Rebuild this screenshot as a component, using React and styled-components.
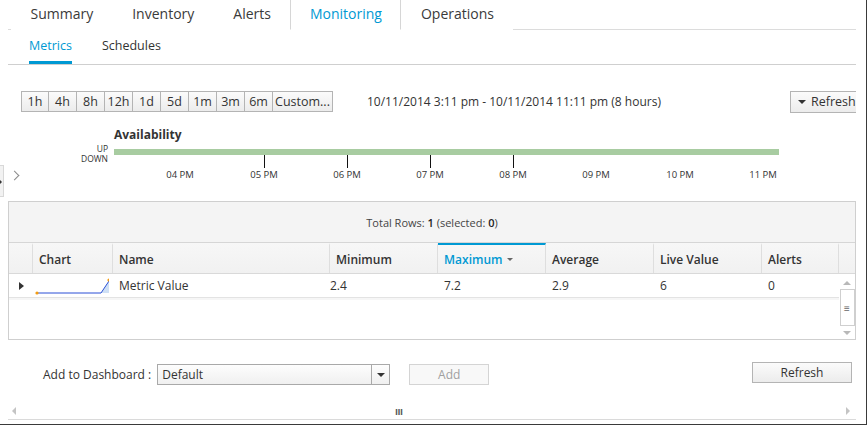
import React from 'react'
import styled, { createGlobalStyle } from 'styled-components'

const GlobalStyle = createGlobalStyle`
  html, body { margin: 0; padding: 0; background: #fff; }
  body { font-family: "Open Sans", "Liberation Sans", sans-serif; color: #333; }
  * { box-sizing: border-box; }
`

const BLUE = '#0099d3'

const Frame = styled.div`
  position: relative;
  width: 867px;
  height: 425px;
  padding-left: 8px;
  border-right: 1px solid #3a3a3a;
  border-bottom: 1px solid #3a3a3a;
  background: #fff;
  overflow: hidden;
`

const Content = styled.div`
  width: 848px;
  height: 100%;
  overflow: hidden;
  display: flex;
  flex-direction: column;
`

const TabBar = styled.div`
  display: flex;
  height: 30px;
  padding-left: 3px;
  border-bottom: 1px solid #dcdcdc;
  flex-shrink: 0;
`

const Tab = styled.div`
  padding: 0 18.5px;
  height: 30px;
  line-height: 28px;
  font-size: 14px;
  color: ${p => (p.$active ? BLUE : '#3a3a3a')};
  background: #fff;
  border: 1px solid ${p => (p.$active ? '#d6d6d6' : 'transparent')};
  border-top: none;
  border-bottom: 1px solid ${p => (p.$active ? '#fff' : 'transparent')};
`

const SubTabBar = styled.div`
  display: flex;
  gap: 30px;
  height: 35px;
  padding-left: 21px;
  border-bottom: 1px solid #cfcfcf;
  flex-shrink: 0;
`

const SubTab = styled.div`
  height: 34px;
  line-height: 31px;
  font-size: 12.5px;
  color: ${p => (p.$active ? BLUE : '#333')};
  border-bottom: 3px solid ${p => (p.$active ? BLUE : 'transparent')};
`

const Toolbar = styled.div`
  display: flex;
  align-items: center;
  margin-top: 26px;
  height: 21px;
  padding-left: 13px;
  flex-shrink: 0;
`

const RangeButton = styled.div`
  width: ${p => p.$w || 28}px;
  height: 21px;
  line-height: 19px;
  text-align: center;
  font-size: 12.5px;
  color: #333;
  white-space: nowrap;
  overflow: visible;
  background: linear-gradient(#fbfbfb, #ececec);
  border: 1px solid #b4b4b4;
  border-left: ${p => (p.$first ? '1px solid #b4b4b4' : 'none')};
`

const DateRange = styled.div`
  margin-left: 34px;
  font-size: 12px;
  color: #333;
  white-space: nowrap;
`

const MenuButton = styled.div`
  margin-left: auto;
  margin-right: -16px;
  flex-shrink: 0;
  width: 82px;
  height: 22px;
  display: flex;
  align-items: center;
  gap: 5px;
  padding-left: 7px;
  font-size: 12.5px;
  color: #333;
  background: linear-gradient(#fbfbfb, #ececec);
  border: 1px solid #b4b4b4;
  &::before {
    content: '';
    border-left: 4px solid transparent;
    border-right: 4px solid transparent;
    border-top: 4px solid #333;
    margin-top: 1px;
  }
`

const AvailTitle = styled.div`
  margin-top: 15px;
  padding-left: 106px;
  font-size: 12px;
  font-weight: 700;
  line-height: 16px;
  color: #333;
  flex-shrink: 0;
`

const ChartSvg = styled.svg`
  display: block;
  flex-shrink: 0;
  text {
    font-family: "Open Sans", "Liberation Sans", sans-serif;
    fill: #333;
  }
`

const Handle = styled.div`
  position: absolute;
  left: 0;
  top: 165px;
  width: 4px;
  height: 32px;
  background: #f2f2f2;
  border: 1px solid #d8d8d8;
  border-left: none;
  &::after {
    content: '';
    position: absolute;
    left: -1px;
    top: 13px;
    border-top: 3px solid transparent;
    border-bottom: 3px solid transparent;
    border-left: 3px solid #333;
  }
`

const Chevron = styled.div`
  position: absolute;
  left: 11px;
  top: 172px;
  width: 7px;
  height: 7px;
  border-right: 1.5px solid #8a8a8a;
  border-top: 1.5px solid #8a8a8a;
  transform: rotate(45deg);
`

const Grid = styled.div`
  margin-top: 17px;
  width: 848px;
  height: 139px;
  border: 1px solid #cfcfcf;
  flex-shrink: 0;
  display: flex;
  flex-direction: column;
`

const GridToolbar = styled.div`
  height: 41px;
  background: #f4f4f4;
  border-bottom: 1px solid #d6d6d6;
  display: flex;
  align-items: center;
  justify-content: center;
  font-size: 11px;
  color: #444;
  b { font-weight: 600; color: #222; }
`

const cols = '24px 80px 217px 108px 108px 108px 108px 77px 1fr'

const HeaderRow = styled.div`
  display: grid;
  grid-template-columns: ${cols};
  height: 31px;
  background: linear-gradient(#f7f7f7, #f1f1f1);
  border-bottom: 1px solid #d9d9d9;
`

const HeaderCell = styled.div`
  display: flex;
  align-items: center;
  gap: 4px;
  padding-left: 6px;
  font-size: 12px;
  font-weight: 600;
  color: ${p => (p.$sorted ? BLUE : '#333')};
  border-right: 1px solid #dedede;
  border-top: 2px solid ${p => (p.$sorted ? BLUE : 'transparent')};
  &:last-child { border-right: none; }
`

const SortArrow = styled.span`
  border-left: 3px solid transparent;
  border-right: 3px solid transparent;
  border-top: 3px solid #666;
`

const Body = styled.div`
  flex: 1;
  display: flex;
`

const Rows = styled.div`
  flex: 1;
`

const DataRow = styled.div`
  display: grid;
  grid-template-columns: 24px 80px 217px 108px 108px 108px 108px 77px;
  height: 24px;
  border-bottom: 1px solid #e3e3e3;
  box-shadow: 0 2px 0 #f6f6f6;
`

const Cell = styled.div`
  display: flex;
  align-items: center;
  padding-left: ${p => (p.$pad != null ? p.$pad : 6)}px;
  font-size: 12px;
  color: #333;
`

const Expander = styled.span`
  margin-left: 10px;
  border-top: 4px solid transparent;
  border-bottom: 4px solid transparent;
  border-left: 5px solid #333;
`

const VScroll = styled.div`
  width: 17px;
  display: flex;
  flex-direction: column;
  align-items: center;
  padding-top: 7px;
`

const Arrow = styled.span`
  width: 0;
  height: 0;
  border-left: 4px solid transparent;
  border-right: 4px solid transparent;
  ${p => (p.$dir === 'up' ? 'border-bottom: 4px solid #b8b8b8;' : 'border-top: 4px solid #b8b8b8;')}
`

const Thumb = styled.div`
  margin: 4px 0 5px;
  width: 15px;
  height: 37px;
  border: 1px solid #cfcfcf;
  background: #fff;
  display: flex;
  align-items: center;
  justify-content: center;
  font-size: 10px;
  color: #666;
  line-height: 1;
`

const BottomBar = styled.div`
  display: flex;
  align-items: flex-end;
  margin-top: 22px;
  height: 23px;
  padding-left: 35px;
  flex-shrink: 0;
`

const Label = styled.div`
  font-size: 12px;
  color: #333;
  line-height: 21px;
  margin-right: 6px;
`

const Select = styled.div`
  width: 233px;
  height: 21px;
  display: flex;
  border: 1px solid #a9a9a9;
  background: linear-gradient(#fdfdfd, #f0f0f0);
`

const SelectValue = styled.div`
  flex: 1;
  padding-left: 4px;
  font-size: 12px;
  line-height: 19px;
  color: #333;
`

const SelectArrow = styled.div`
  width: 18px;
  border-left: 1px solid #a9a9a9;
  display: flex;
  align-items: center;
  justify-content: center;
  &::after {
    content: '';
    border-left: 4px solid transparent;
    border-right: 4px solid transparent;
    border-top: 4px solid #333;
  }
`

const Button = styled.div`
  width: ${p => p.$w}px;
  height: 21px;
  line-height: 19px;
  text-align: center;
  font-size: 12px;
  color: ${p => (p.$disabled ? '#a0a0a0' : '#333')};
  background: ${p => (p.$disabled ? '#f8f8f8' : 'linear-gradient(#fbfbfb, #ececec)')};
  border: 1px solid ${p => (p.$disabled ? '#d4d4d4' : '#b4b4b4')};
  margin-left: ${p => (p.$push ? 'auto' : `${p.$ml || 0}px`)};
  margin-right: ${p => p.$mr || 0}px;
  align-self: ${p => (p.$top ? 'flex-start' : 'flex-end')};
`

const HScroll = styled.div`
  margin-top: 18px;
  height: 17px;
  border-bottom: 1px solid #dadada;
  display: flex;
  align-items: center;
  padding: 0 6px 0 4px;
  flex-shrink: 0;
`

const SideArrow = styled.span`
  border-top: 4px solid transparent;
  border-bottom: 4px solid transparent;
  ${p => (p.$dir === 'left' ? 'border-right: 4px solid #c4c4c4;' : 'border-left: 4px solid #c4c4c4;')}
`

const Grip = styled.span`
  font-size: 9px;
  font-weight: 700;
  color: #555;
  letter-spacing: -0.5px;
  margin-left: 379px;
  margin-right: auto;
`

const ranges = ['1h', '4h', '8h', '12h', '1d', '5d', '1m', '3m', '6m']
const hours = ['04 PM', '05 PM', '06 PM', '07 PM', '08 PM', '09 PM', '10 PM', '11 PM']
const hourX = [172, 256, 339, 422, 505, 588, 672, 755]
const ticks = [256, 339, 422, 505]

const Sparkline = () => (
  <svg width="76" height="22" viewBox="0 0 76 22">
    <polygon points="68,18 76,6 76,18" fill="#cfe0f5" />
    <polyline points="4,18 68,18 76,6" fill="none" stroke="#2a4fd6" strokeWidth="1" />
    <circle cx="4" cy="18" r="1.6" fill="#f39c12" />
    <circle cx="76" cy="5" r="1.6" fill="#f39c12" />
  </svg>
)

export default function App() {
  return (
    <Frame>
      <GlobalStyle />
      <Content>
        <TabBar>
          <Tab>Summary</Tab>
          <Tab>Inventory</Tab>
          <Tab>Alerts</Tab>
          <Tab $active>Monitoring</Tab>
          <Tab>Operations</Tab>
        </TabBar>
        <SubTabBar>
          <SubTab $active>Metrics</SubTab>
          <SubTab>Schedules</SubTab>
        </SubTabBar>

        <Toolbar>
          {ranges.map((r, i) => (
            <RangeButton key={r} $first={i === 0}>{r}</RangeButton>
          ))}
          <RangeButton $w={60}>Custom...</RangeButton>
          <DateRange>10/11/2014 3:11 pm - 10/11/2014 11:11 pm (8 hours)</DateRange>
          <MenuButton>Refresh</MenuButton>
        </Toolbar>

        <AvailTitle>Availability</AvailTitle>
        <ChartSvg width="848" height="41" viewBox="0 0 848 41">
          <text x="100" y="9" fontSize="8.5" textAnchor="end">UP</text>
          <text x="100" y="19" fontSize="8.5" textAnchor="end">DOWN</text>
          <rect x="106" y="6" width="665" height="6" fill="#a8cca1" />
          {ticks.map(x => (
            <line key={x} x1={x + 0.5} x2={x + 0.5} y1="12" y2="25" stroke="#111" strokeWidth="1" />
          ))}
          {hours.map((h, i) => (
            <text key={h} x={hourX[i]} y="35" fontSize="9.5" textAnchor="middle">{h}</text>
          ))}
        </ChartSvg>

        <Grid>
          <GridToolbar>
            Total Rows:&nbsp;<b>1</b>&nbsp;(selected:&nbsp;<b>0</b>)
          </GridToolbar>
          <HeaderRow>
            <HeaderCell />
            <HeaderCell>Chart</HeaderCell>
            <HeaderCell>Name</HeaderCell>
            <HeaderCell>Minimum</HeaderCell>
            <HeaderCell $sorted>Maximum <SortArrow /></HeaderCell>
            <HeaderCell>Average</HeaderCell>
            <HeaderCell>Live Value</HeaderCell>
            <HeaderCell>Alerts</HeaderCell>
            <HeaderCell />
          </HeaderRow>
          <Body>
            <Rows>
              <DataRow>
                <Cell $pad={0}><Expander /></Cell>
                <Cell $pad={0}><Sparkline /></Cell>
                <Cell>Metric Value</Cell>
                <Cell $pad={0}>2.4</Cell>
                <Cell>7.2</Cell>
                <Cell>2.9</Cell>
                <Cell>6</Cell>
                <Cell>0</Cell>
              </DataRow>
            </Rows>
            <VScroll>
              <Arrow $dir="up" />
              <Thumb>≡</Thumb>
              <Arrow $dir="down" />
            </VScroll>
          </Body>
        </Grid>

        <BottomBar>
          <Label>Add to Dashboard :</Label>
          <Select>
            <SelectValue>Default</SelectValue>
            <SelectArrow />
          </Select>
          <Button $w={80} $ml={19} $disabled>Add</Button>
          <Button $w={100} $mr={4} $top $push>Refresh</Button>
        </BottomBar>

        <HScroll>
          <SideArrow $dir="left" />
          <Grip>III</Grip>
          <SideArrow $dir="right" />
        </HScroll>
      </Content>
      <Handle />
      <Chevron />
    </Frame>
  )
}
